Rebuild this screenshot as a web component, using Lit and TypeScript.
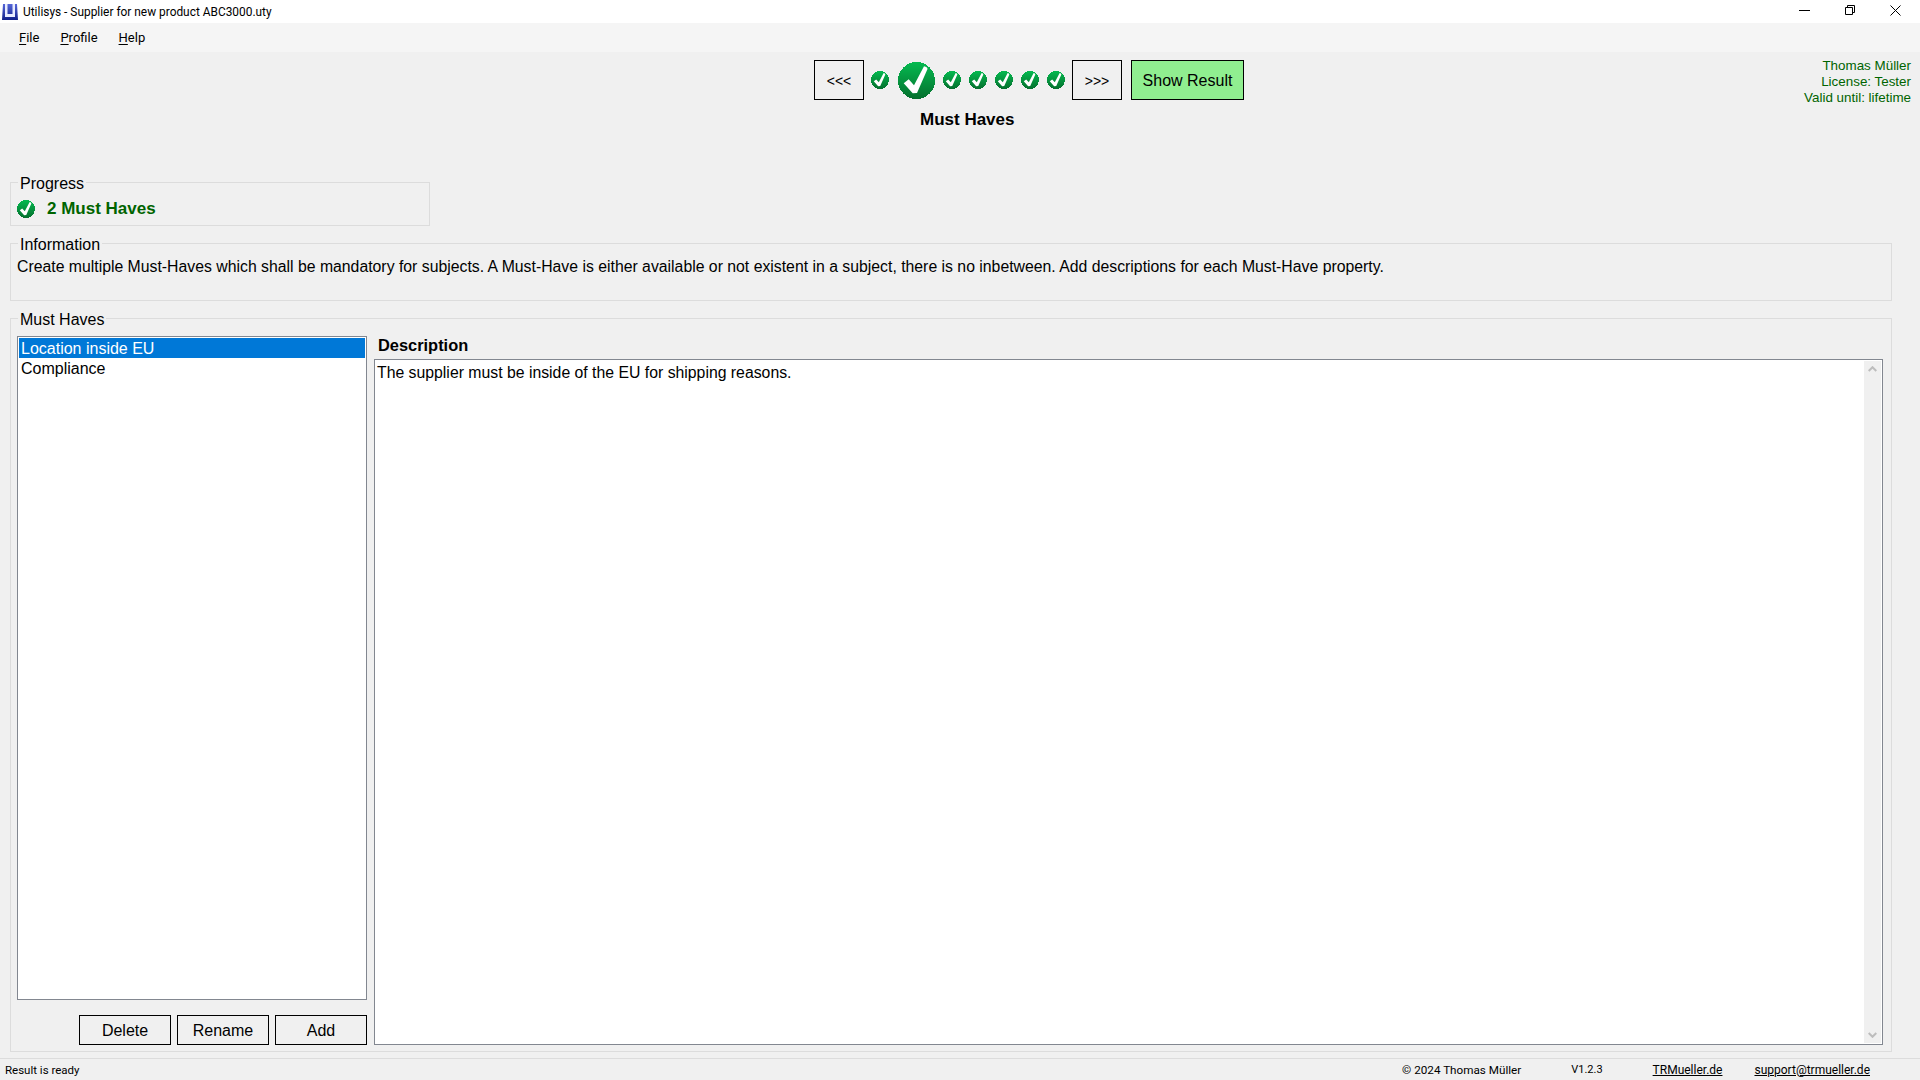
import { LitElement, html, css } from "lit";
import { customElement } from "lit/decorators.js";

const check = (size: number, cls = "") => html`<svg class="check ${cls}" width=${size} height=${size} viewBox="0 0 37 37">
  <defs><linearGradient id="g" x1="0" y1="0" x2="0" y2="1"><stop offset="0" stop-color="#05ba50"/><stop offset="1" stop-color="#05702e"/></linearGradient></defs>
  <circle cx="18.5" cy="18.5" r="18.5" fill="url(#g)" shape-rendering="crispEdges"/>
  <path d="M5.7 21.3 L10.7 17.3 L16 23.3 L26 4.2 Q29.5 4.8 29.5 7 L19 31 L14.7 31.3 Z" fill="#fff"/>
</svg>`;

@customElement("app-root")
export class AppRoot extends LitElement {
  static styles = css`
    :host { display: flex; flex-direction: column; width: 1920px; height: 1080px; background: #f0f0f0; overflow: hidden; font-family: "Liberation Sans", Arial, sans-serif; font-size: 16px; color: #000; }
    .title { height: 23px; background: #fff; display: flex; align-items: center; flex: none; font-family: Roboto, "Noto Sans", sans-serif; font-size: 11.9px; color: #000; }
    .logo { margin: 0 5px 0 2px; flex: none; }
    .title-text { flex: 1; }
    .winbtns { display: flex; align-self: flex-start; margin-right: 2px; }
    .winbtn { width: 45.5px; height: 20px; display: flex; align-items: center; justify-content: center; }
    .menu { height: 29px; background: #f5f5f5; display: flex; align-items: center; gap: 21px; padding-left: 19px; flex: none; font-family: Roboto, "Noto Sans", sans-serif; font-size: 13px; }
    .menu u { text-underline-offset: 2px; }
    .main { flex: 1; display: flex; flex-direction: column; padding: 0 28px 6px 10px; min-height: 0; position: relative; }
    .top { height: 130px; flex: none; display: flex; flex-direction: column; align-items: flex-start; padding-top: 8px; box-sizing: border-box; }
    .nav { display: flex; align-items: center; height: 40px; margin-left: 804px; }
    .nbtn { box-sizing: border-box; height: 40px; width: 50px; border: 1px solid #000; display: flex; align-items: center; justify-content: center; font-size: 14px; padding-top: 1px; }
    .checks { display: flex; align-items: center; gap: 8px; margin: 0 7px; }
    .check { display: block; flex: none; }
    .check.big { margin-left: 1px; }
    .show { width: 113px; background: #90ee90; margin-left: 9px; font-size: 16px; }
    .page-title { font-weight: 700; font-size: 17px; line-height: 18px; margin-top: 11px; margin-left: 910px; }
    .license { position: absolute; top: 6px; right: 9px; text-align: right; color: #006400; font-size: 13.4px; line-height: 16px; }
    .group { border: 1px solid #dcdcdc; box-sizing: border-box; position: relative; flex: none; margin-bottom: 17px; }
    .legend { position: absolute; left: 7px; top: -8px; background: #f0f0f0; padding: 0 2px; line-height: 18px; font-weight: 400; font-size: 16px; color: #000; }
    .progress { width: 420px; height: 44px; display: flex; align-items: center; padding-left: 6px; padding-top: 10px; gap: 12px; font-weight: 700; color: #006400; font-size: 17px; }
    .info { height: 58px; padding: 13px 0 0 6px; line-height: 20px; font-size: 15.8px; }
    .haves { flex: 1; min-height: 0; margin-bottom: 0; display: grid; grid-template-columns: 350px 1fr; column-gap: 7px; padding: 17px 8px 6px 6px; }
    .left { display: flex; flex-direction: column; min-height: 0; }
    .list { flex: 1; background: #fff; border: 1px solid #828790; padding: 1px; box-sizing: border-box; }
    .row { height: 20px; line-height: 19px; padding: 1px 0 0 2px; box-sizing: border-box; }
    .row.sel { background: #0078d7; color: #fff; }
    .btns { display: flex; justify-content: flex-end; gap: 6px; margin-top: 15px; flex: none; }
    .btn { box-sizing: border-box; width: 92px; height: 30px; border: 1px solid #000; display: flex; align-items: center; justify-content: center; padding-top: 1px; }
    .right { display: flex; flex-direction: column; min-height: 0; }
    .dlabel { font-weight: 700; font-size: 16.4px; height: 23px; line-height: 18px; padding-left: 4px; flex: none; }
    .box { flex: 1; background: #fff; border: 1px solid #828790; display: flex; box-sizing: border-box; min-height: 0; }
    .boxtext { flex: 1; padding: 4px 2px; line-height: 18px; font-size: 15.8px; }
    .sb { width: 17px; background: #f0f0f0; margin: 1px; display: flex; flex-direction: column; justify-content: space-between; align-items: center; padding: 5px 0; box-sizing: border-box; }
    .status { height: 22px; border-top: 1px solid #dcdcdc; flex: none; display: flex; align-items: center; font-family: Roboto, "Noto Sans", sans-serif; font-size: 12px; padding: 0 50px 0 5px; box-sizing: border-box; }
    .status .s { flex: 1; font-size: 11.5px; }
    .status .copy { margin-right: 50px; font-size: 11.7px; }
    .status .ver { margin-right: 50px; font-size: 11px; }
    .status .site { margin-right: 32px; }
  `;

  render() {
    return html`
      <div class="title">
        <svg class="logo" width="16" height="16" viewBox="0 0 16 16">
          <defs><linearGradient id="lg" x1="0" y1="0" x2="0" y2="1"><stop offset="0" stop-color="#5566d8"/><stop offset="1" stop-color="#10208a"/></linearGradient></defs>
          <path d="M1 0h14l1 16H0z" fill="url(#lg)"/>
          <path d="M3 0h2.5v10h5V0H13v13H3z" fill="#e8ecff"/>
        </svg>
        <span class="title-text">Utilisys - Supplier for new product ABC3000.uty</span>
        <div class="winbtns">
          <div class="winbtn"><svg width="11" height="10" viewBox="0 0 11 10"><path d="M0 5.5h11" stroke="#000" fill="none"/></svg></div>
          <div class="winbtn"><svg width="10" height="10" viewBox="0 0 10 10"><path d="M.5 2.5h7v7h-7zM2.5 2.5v-2h7v7h-2" stroke="#000" fill="none"/></svg></div>
          <div class="winbtn"><svg width="11" height="11" viewBox="0 0 11 11"><path d="M.5.5l10 10M10.5.5l-10 10" stroke="#000" fill="none"/></svg></div>
        </div>
      </div>
      <div class="menu">
        <span><u>F</u>ile</span><span><u>P</u>rofile</span><span><u>H</u>elp</span>
      </div>
      <div class="main">
        <div class="top">
          <div class="nav">
            <div class="nbtn">&lt;&lt;&lt;</div>
            <div class="checks">
              ${check(18)}${check(37, "big")}${check(18)}${check(18)}${check(18)}${check(18)}${check(18)}
            </div>
            <div class="nbtn">&gt;&gt;&gt;</div>
            <div class="nbtn show">Show Result</div>
          </div>
          <div class="page-title">Must Haves</div>
        </div>
        <div class="license">Thomas Müller<br />License: Tester<br />Valid until: lifetime</div>
        <div class="group progress">
          <span class="legend">Progress</span>
          ${check(18)}<span>2 Must Haves</span>
        </div>
        <div class="group info">
          <span class="legend">Information</span>
          <div class="txt">Create multiple Must-Haves which shall be mandatory for subjects. A Must-Have is either available or not existent in a subject, there is no inbetween. Add descriptions for each Must-Have property.</div>
        </div>
        <div class="group haves">
          <span class="legend">Must Haves</span>
          <div class="left">
            <div class="list">
              <div class="row sel">Location inside EU</div>
              <div class="row">Compliance</div>
            </div>
            <div class="btns">
              <div class="btn">Delete</div><div class="btn">Rename</div><div class="btn">Add</div>
            </div>
          </div>
          <div class="right">
            <div class="dlabel">Description</div>
            <div class="box">
              <div class="boxtext">The supplier must be inside of the EU for shipping reasons.</div>
              <div class="sb">
                <svg width="9" height="6" viewBox="0 0 9 6"><path d="M.7 5L4.5 1.2 8.3 5" stroke="#bdbdbd" stroke-width="2" fill="none"/></svg>
                <svg width="9" height="6" viewBox="0 0 9 6"><path d="M.7 1L4.5 4.8 8.3 1" stroke="#bdbdbd" stroke-width="2" fill="none"/></svg>
              </div>
            </div>
          </div>
        </div>
      </div>
      <div class="status">
        <span class="s">Result is ready</span>
        <span class="copy">© 2024 Thomas Müller</span>
        <span class="ver">V1.2.3</span>
        <u class="site">TRMueller.de</u>
        <u>support@trmueller.de</u>
      </div>
    `;
  }
}
